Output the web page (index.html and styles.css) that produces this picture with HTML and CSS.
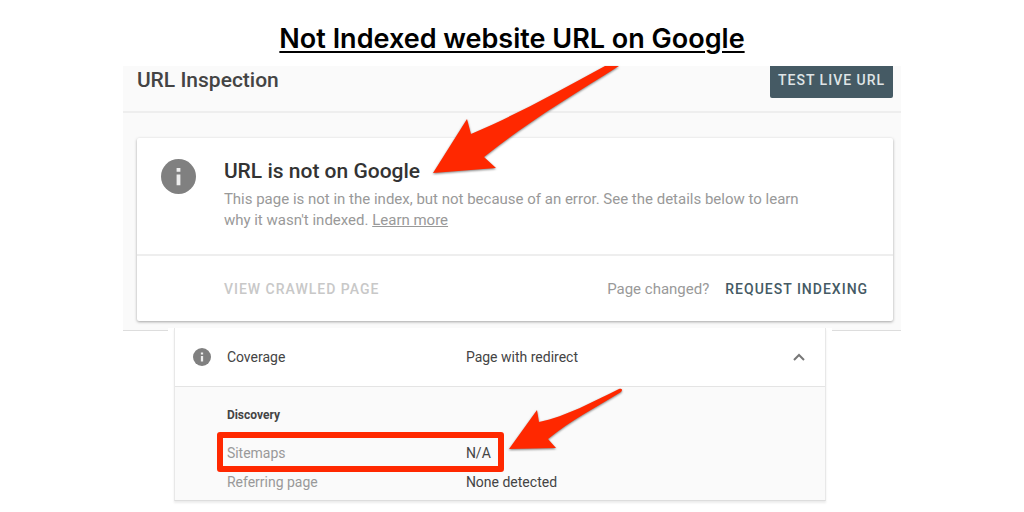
FILE: index.html
```
<!DOCTYPE html>
<html lang="en">
<head>
	<meta charset="utf-8">
	<title>Not Indexed website URL on Google</title>
	<link rel="stylesheet" href="styles.css">
</head>
<body>
	<h1 class="title">Not Indexed website URL on Google</h1>

	<main class="inspection">
		<header class="bar">
			<h2 class="bar-title">URL Inspection</h2>
			<button class="test" type="button">TEST LIVE URL</button>
		</header>

		<section class="card">
			<div class="status">
				<svg class="info" viewBox="0 0 24 24" aria-hidden="true">
					<circle cx="12" cy="12" r="12" fill="#808080"/>
					<path d="M10.7 6.2h2.6v2.5h-2.6zM10.7 10.7h2.6v7.3h-2.6z" fill="#eee"/>
				</svg>
				<div class="status-text">
					<h3 class="status-title">URL is not on Google</h3>
					<p class="status-info">This page is not in the index, but not because of an error. See the details below to learn why it wasn't indexed. <a href="#">Learn more</a></p>
				</div>
			</div>
			<div class="actions">
				<button class="action" type="button" disabled>VIEW CRAWLED PAGE</button>
				<span class="changed">Page changed?</span>
				<button class="action" type="button">REQUEST INDEXING</button>
			</div>
		</section>

		<svg class="arrow arrow-top" viewBox="0 0 190 112" aria-hidden="true">
			<path d="M3 107L37 53L41 68C88 48 133 23 175 0H189C143 29 96 57 54 91L66 102Z"/>
		</svg>
	</main>

	<div class="coverage-wrap">
		<section class="coverage">
			<div class="coverage-head">
				<svg class="info info-small" viewBox="0 0 24 24" aria-hidden="true">
					<circle cx="12" cy="12" r="12" fill="#808080"/>
					<path d="M10.5 6h3v2.6h-3zM10.5 10.5h3v7.5h-3z" fill="#eee"/>
				</svg>
				<span class="name">Coverage</span>
				<span class="value">Page with redirect</span>
				<button class="toggle" type="button" aria-label="Collapse coverage">
					<svg viewBox="0 0 12 8" width="12" height="8"><path d="M1 7l5-5 5 5" fill="none" stroke="#777" stroke-width="2"/></svg>
				</button>
			</div>
			<div class="coverage-body">
				<table class="discovery">
					<caption>Discovery</caption>
					<tr>
						<th scope="row">Sitemaps</th>
						<td>N/A</td>
					</tr>
					<tr>
						<th scope="row">Referring page</th>
						<td>None detected</td>
					</tr>
				</table>
				<!-- red marks over the sitemaps row -->
				<div class="mark"></div>
				<svg class="arrow arrow-bottom" viewBox="0 0 120 66" aria-hidden="true">
					<path d="M3 62L31 23L33 35C61 29 86 15 113 2C116 1 117 3 115 5C91 20 65 33 42 52L50 61Z"/>
				</svg>
			</div>
		</section>
	</div>
</body>
</html>
```
FILE: styles.css
```
* {
	box-sizing: border-box;
}
body {
	margin: 0;
	background-color: #fff;
	font-family: Roboto, sans-serif;
	color: #444;
}
h1, h2, h3, p {
	margin: 0;
}
button {
	border: 0;
	padding: 0;
	background: none;
	font-family: inherit;
}
.title {
	padding: 21px 0 9px;
	font: 600 27px/36px Inter, sans-serif;
	color: #000;
	text-align: center;
	text-decoration: underline;
	text-decoration-thickness: 2px;
	text-underline-offset: 3px;
}
.inspection {
	position: relative;
	width: 76%;
	margin: 0 auto;
	padding-bottom: 9px;
	background-color: #fafafa;
	border-bottom: 1px solid #ddd;
}
.bar {
	display: flex;
	justify-content: space-between;
	align-items: flex-start;
	height: 47px;
	padding: 0 8px 0 14px;
	border-bottom: 2px solid #eee;
}
.bar-title {
	font-size: 21px;
	line-height: 28px;
	font-weight: 500;
}
.test {
	padding: 0 8px 4px;
	height: 32px;
	background-color: #455a64;
	border-radius: 0 0 2px 2px;
	font-size: 14px;
	font-weight: 500;
	letter-spacing: 1px;
	color: #dfe4e6;
}
.card {
	margin: 25px 8px 0 14px;
	background-color: #fff;
	border-radius: 2px;
	box-shadow: 0 1px 3px rgba(0, 0, 0, .35);
}
.status {
	display: flex;
	gap: 28px;
	padding: 21px 72px 23px 24px;
	border-bottom: 2px solid #eee;
}
.info {
	flex: none;
	width: 35px;
	height: 35px;
}
.status-title {
	font-size: 21px;
	line-height: 24px;
	font-weight: 500;
	color: #333;
}
.status-info {
	padding-top: 6px;
	font-size: 15px;
	line-height: 21px;
	color: #999;
}
.status-info a {
	color: inherit;
}
.actions {
	display: flex;
	align-items: center;
	gap: 16px;
	height: 65px;
	padding: 0 25px 0 87px;
}
.action {
	font-size: 14px;
	font-weight: 500;
	letter-spacing: 1px;
	color: #455a64;
}
.action:disabled {
	color: #c8c8c8;
}
.changed {
	margin-left: auto;
	font-size: 15px;
	color: #999;
}
.arrow {
	position: absolute;
	fill: #ff2800;
	filter: drop-shadow(0 1px 1px rgba(0, 0, 0, .5));
}
.arrow-top {
	left: 307px;
	top: 0;
	width: 190px;
	height: 112px;
}
.coverage-wrap {
	position: relative;
	width: calc(76% - 114px);
	margin: -3px 0 0 calc(12% + 45px);
	padding: 0 6px 6px;
	background-color: #fff;
}
.coverage {
	border: 1px solid #e8e8e8;
	border-top: 0;
	border-bottom-color: #ddd;
	box-shadow: 0 2px 2px rgba(0, 0, 0, .08);
	font-size: 14px;
}
.coverage-head {
	display: flex;
	align-items: center;
	height: 59px;
	padding: 0 20px 0 18px;
	border-bottom: 1px solid #e4e4e4;
}
.info-small {
	width: 18px;
	height: 18px;
	margin-right: 16px;
}
.name {
	width: 239px;
}
.toggle {
	display: flex;
	margin-left: auto;
}
.coverage-body {
	position: relative;
	padding: 14px 52px 4px;
	background-color: #fafafa;
}
.discovery {
	border-collapse: collapse;
}
.discovery caption {
	padding-bottom: 8px;
	font-size: 12px;
	line-height: 29px;
	font-weight: 700;
	text-align: left;
}
.discovery th,
.discovery td {
	height: 29px;
	padding: 0;
	font-weight: 400;
	text-align: left;
}
.discovery th {
	width: 239px;
	color: #999;
}
.mark {
	position: absolute;
	left: 42px;
	top: 45px;
	width: 287px;
	height: 40px;
	border: 6px solid #ff2800;
	border-radius: 3px;
}
.arrow-bottom {
	left: 331px;
	top: 0;
	width: 120px;
	height: 66px;
}
```
